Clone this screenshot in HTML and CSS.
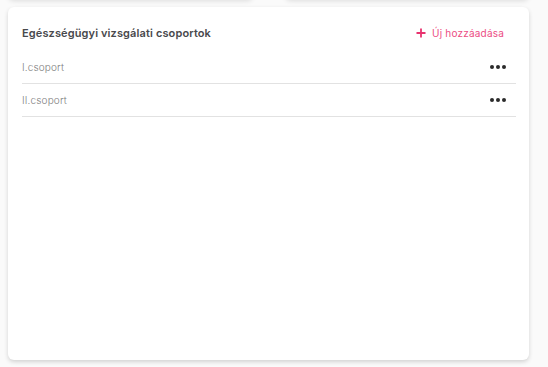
FILE: index.html
```html
<!DOCTYPE html>
<html lang="hu">
<head>
<meta charset="utf-8">
<link rel="stylesheet" href="styles.css">
</head>
<body>
<div class="top-row">
  <div class="top-card first"></div>
  <div class="top-card second"></div>
</div>
<section class="card">
  <header class="card-head">
    <h2 class="title">Egészségügyi vizsgálati csoportok</h2>
    <button class="add-btn">
      <svg class="plus" width="10" height="10" viewBox="0 0 10 10"><path d="M5 0.5V9.5M0.5 5H9.5" stroke="#e8336f" stroke-width="1.8" fill="none"/></svg>
      <span>Új hozzáadása</span>
    </button>
  </header>
  <ul class="list">
    <li class="row"><span class="name">I.csoport</span><span class="dots"><i></i><i></i><i></i></span></li>
    <li class="row"><span class="name">II.csoport</span><span class="dots"><i></i><i></i><i></i></span></li>
  </ul>
</section>
</body>
</html>
```
FILE: styles.css
```css
html, body { margin: 0; padding: 0; }
body {
  background: #fafafa;
  font-family: Inter, "Noto Sans", sans-serif;
  width: 548px;
  height: 367px;
  overflow: hidden;
  padding: 0 19px 0 8px;
  box-sizing: border-box;
}
.top-row {
  display: flex;
  gap: 32px;
  margin-top: -20px;
  height: 20px;
}
.top-card {
  background: #fff;
  border-radius: 6px;
  box-shadow: 0 1px 5px rgba(0,0,0,0.12);
}
.top-card.first { width: 245px; }
.top-card.second { flex: 1; }
.card {
  margin-top: 7px;
  height: 353px;
  background: #fff;
  border-radius: 6px;
  box-shadow: 0 2px 4px rgba(0,0,0,0.16);
  padding: 18px 13px 0 14px;
  box-sizing: border-box;
}
.card-head {
  display: flex;
  justify-content: space-between;
  align-items: center;
  height: 16px;
  padding-right: 12px;
}
.title {
  margin: 0;
  font-size: 11px;
  font-weight: 600;
  color: #48494c;
  letter-spacing: 0.12px;
}
.add-btn {
  display: flex;
  align-items: center;
  gap: 6px;
  border: 0;
  background: none;
  padding: 0;
  font-family: inherit;
  font-size: 10px;
  color: #ec4d84;
  letter-spacing: 0.2px;
}
.plus { display: block; }
.list {
  list-style: none;
  margin: 10px 0 0;
  padding: 0;
}
.row {
  display: flex;
  justify-content: space-between;
  align-items: center;
  height: 32px;
  border-bottom: 1px solid #e2e2e2;
}
.name {
  font-size: 10px;
  font-weight: 300;
  color: #808080;
  letter-spacing: 0.15px;
}
.dots {
  display: flex;
  gap: 2px;
  margin-right: 10px;
}
.dots i {
  width: 4px;
  height: 4px;
  border-radius: 50%;
  background: #2b2b2b;
}
```
